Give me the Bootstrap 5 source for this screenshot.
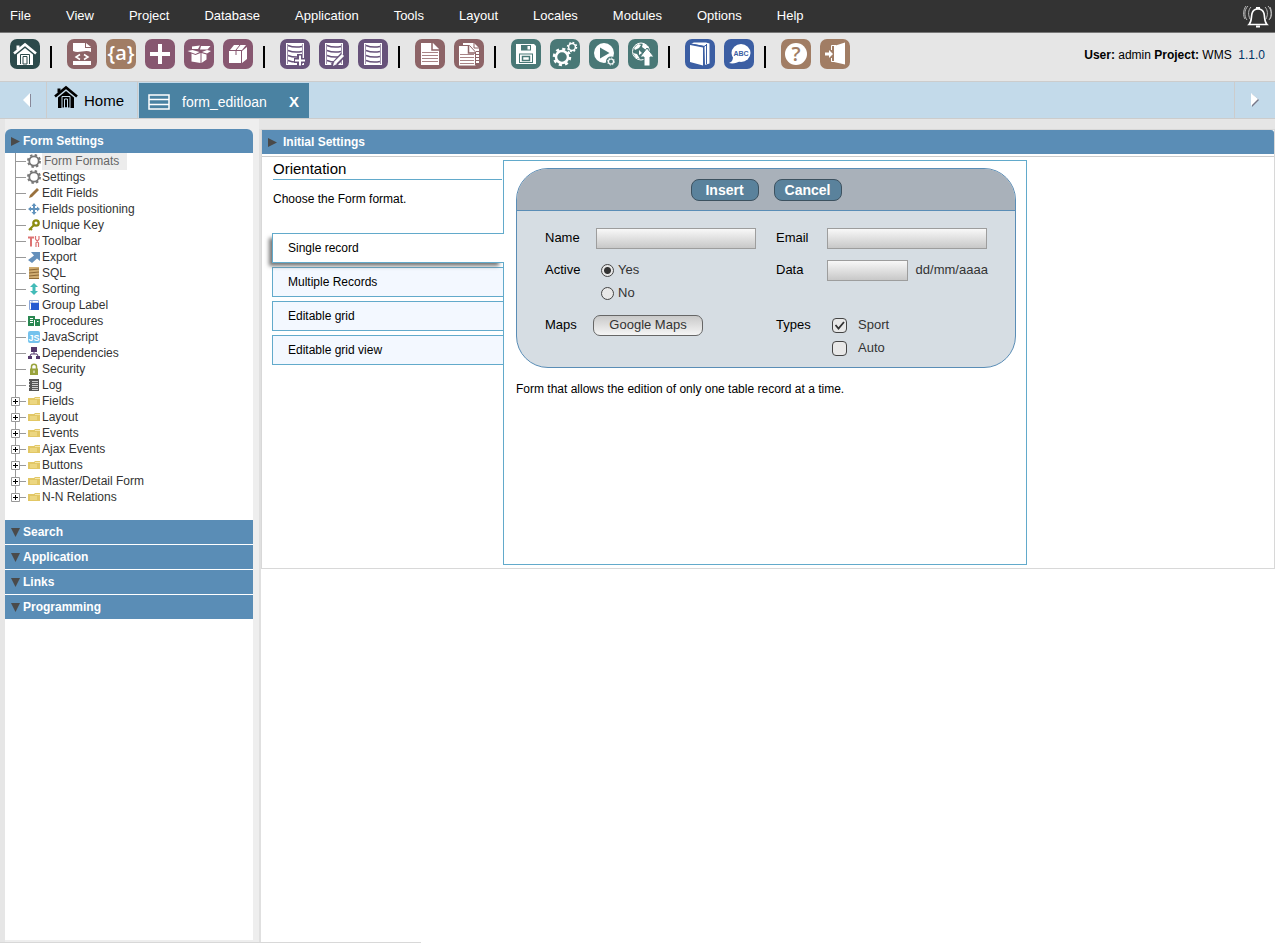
<!DOCTYPE html>
<html lang="en">
<head>
<meta charset="utf-8">
<meta name="viewport" content="width=device-width, initial-scale=1">
<title>form_editloan</title>
<link href="https://cdn.jsdelivr.net/npm/bootstrap@5.3.0/dist/css/bootstrap.min.css" rel="stylesheet">
<style>
:root{--bar:#5a8db6;--edge:#62aacb;--line:#ccc}
body{font-family:"Liberation Sans",Arial,sans-serif;font-size:12px;line-height:16px;color:#000;background:#e6e6e6}
a{color:inherit;text-decoration:none}
svg{display:block;flex:none}
.menu{background:#333;color:#fff;border-bottom:1px solid #777;height:33px;font-size:13px;padding:0 3px 0 10px}
.menu ul{gap:35px}
.tools{height:48px;padding:0 10px 4px}
.sets{gap:15px;padding-bottom:2px}
.grp{gap:9px;padding-right:10px}
.sep{width:2px;height:22px;background:#000;margin-top:5px}
.tool{width:30px;height:30px;border:0;border-radius:7px;padding:0;color:#fff}
.home{background:#2c4a4b}.rose{background:#8d6467}.tan{background:#a17d64}.plum{background:#875770}
.violet{background:#67527a}.green{background:#497876}.blue{background:#3b5ea3}
.version{color:#036}
.tabs{background:#c3daea;height:38px;border:solid var(--line);border-width:1px 0}
.tabs .arrow{width:46px;border:0;background:none;padding:0 0 0 5px}
.tabs .next{width:41px;border-left:1px solid var(--line);padding:0}
.tab-home{width:92px;font-size:15px;gap:6px;padding:2px 0 0 7px;border:solid var(--line);border-width:0 1px}
.tab-open{width:170px;margin:1px 0 0 1px;padding:2px 10px 0 9px;gap:12px;background:#4a82a2;color:#fff;font-size:14px}
.tab-open button{border:0;background:none;color:#fff;font-weight:700;font-size:15px;padding:0}
.side{width:259px;padding:10px 0 2px 5px;background:linear-gradient(90deg,#e6e6e6 5px,#eee 5px)}
.side-in{width:248px;background:#fff;border-radius:6px 6px 0 0}
.bar{height:24px;background:var(--bar);color:#fff;font-weight:700;font-size:12px;padding:0 6px;gap:3px;border:0;text-align:left}
.side .bar + .bar{margin-top:1px}
.tree{padding:0 0 15px 10px;margin:0}
.tree li{height:16px;position:relative;display:flex;align-items:center;gap:2px;padding-left:13px;color:#333}
.tree li::before{content:"";position:absolute;left:0;top:0;bottom:0;border-left:1px solid #999}
.tree li:last-child::before{bottom:8px}
.tree li::after{content:"";position:absolute;left:0;top:8px;width:11px;border-top:1px solid #999}
.tree .on a{background:#ececec;color:#666;padding:0 8px 1px 2px;height:17px}
.cog{width:14px;height:14px;margin:0 -1px}
.plus{position:absolute;z-index:1;left:-4px;top:4px;width:9px;height:9px}
.work{border-left:2px solid #e0e0e0;margin-top:10px;background:#fff}
.panel{border:1px solid #d8d8d8}
.panel .bar{padding-left:6px;gap:6px;border-top-right-radius:3px}
.panel-in{border-top:1px solid var(--line);margin-top:2px;padding:3px 10px}
.pick{width:231px}
.pick h1{font-size:15px;line-height:18px;margin:0 1px 11px;padding-bottom:1px;border-bottom:1px solid var(--edge);font-weight:400}
.pick p{margin:0 1px 26px}
.opt{display:flex;align-items:center;width:231px;height:30px;padding:0 15px;margin-bottom:4px;border:1px solid var(--edge);border-right:0;background:#f3f8ff;text-align:left}
.opt.on{width:232px;background:#fff;position:relative;box-shadow:-4px 4px 4px -1px #777;clip-path:inset(0 0 -8px -8px)}
.frame{width:524px;min-height:405px;border:1px solid var(--edge);padding:7px 12px 0}
.demo{width:500px;height:200px;border:1px solid var(--bar);border-radius:32px;background:#d6dde3;overflow:hidden;font-size:13px}
.demo-top{height:42px;background:#a9b1ba;border-bottom:1px solid var(--bar);gap:15px}
.demo-top button{width:68px;height:22px;padding:0;border:1px solid #3d5260;border-radius:8px;background:#5a829c;color:#fff;font-weight:700;font-size:14px;line-height:20px}
.demo-grid{display:grid;grid-template-columns:51px 180px 51px 1fr;grid-auto-rows:min-content;row-gap:9px;padding:15px 0 0 28px}
.line{display:flex;align-items:center;height:23px;padding-top:1px}
.field{width:160px;height:21px;border:1px solid #9d9d9d;border-radius:0;background:linear-gradient(#f8f8f8,#c8c8c8);padding:0 4px}
.field.short-date{width:81px}
.soft{color:#333}
.tick{appearance:none;width:13px;height:13px;margin:0;border:1px solid #444;background:#e8e8e8;flex:none}
.tick[type=radio]{border-radius:50%;margin:0 4px 0 5px}
.tick[type=radio]:checked{background:radial-gradient(#333 0 3px,#e8e8e8 4px)}
.tick[type=checkbox]{width:15px;height:15px;border-radius:4px;margin:0 11px 0 5px}
.tick[type=checkbox]:checked{background:#e8e8e8 url("data:image/svg+xml,%3Csvg xmlns='http://www.w3.org/2000/svg' viewBox='0 0 13 13'%3E%3Cpath d='M2.500 6l3 3.500L11 3' fill='none' stroke='%23333' stroke-width='1.800'/%3E%3C/svg%3E")}
.maps{width:110px;height:21px;margin-left:-3px;border:1px solid #666;border-radius:7px;background:linear-gradient(#c9c9c9,#f5f5f5);padding:0}
.note{margin:13px 0 0}
.foot-line{height:1px;background:linear-gradient(90deg,#d8d8d8 33%,#fff 33%)}
</style>
</head>
<body class="d-flex flex-column vh-100 overflow-hidden">

<!-- shared glyphs -->
<svg width="0" height="0" class="position-absolute">
<symbol id="hut" viewBox="0 0 24 24"><path d="M1 11.500 12 2.500l11 9" fill="none" stroke="currentColor" stroke-width="2.600"/><path d="M4 12.500 12 6l8 6.500V23H4z" fill="currentColor"/><path d="M3.500 3.500h3v4h-3z" fill="currentColor"/></symbol>
<symbol id="right" viewBox="0 0 9 9"><path d="M0 0 9 4.500 0 9z" fill="#4a4a4a"/></symbol>
<symbol id="down" viewBox="0 0 9 9"><path d="M0 0H9L4.500 9z" fill="#4a4a4a"/></symbol>
<symbol id="box-plus" viewBox="0 0 9 9"><path d="M.5.5h8v8h-8z" fill="#fff" stroke="#999"/><path d="M2 4.500h5M4.500 2v5" stroke="#000"/></symbol>
<symbol id="folder" viewBox="0 0 12 12"><path d="M0 3h6l1-1h5v8H0z" fill="#e2c765"/><path d="M0 4h7v-1h5v1H0z" fill="#f6e7ab"/><path d="M2 5h7v4H2z" fill="#ecd680"/></symbol>
<symbol id="gear" viewBox="0 0 14 14"><circle cx="7" cy="7" r="4.700" fill="none" stroke="#777" stroke-width="1.800"/><circle cx="7" cy="7" r="6" fill="none" stroke="#777" stroke-width="2" stroke-dasharray="2.400 2.310"/></symbol>
<symbol id="sheet" viewBox="0 0 30 30"><path d="M6 4h12l6 6v16H6z" fill="#fff"/><path d="M17 4v7h7" fill="none" stroke="#8d6467" stroke-width="1.500"/><path d="M7 13.500h16M7 16.500h16M7 19.500h16M7 22.500h16" stroke="#a98486"/></symbol>
<symbol id="db" viewBox="0 0 30 30"><path d="M6 4h18v22H6z" fill="#fff"/><path d="M8 6.500c5 2 9 2 14 1M8 11.500c5 2 9 2 14 1M8 16.500c5 2 9 2 14 1M8 21.500c5 2 9 2 14 1" fill="none" stroke="#67527a" stroke-width="1.500"/><path d="M7.500 5v20M22.500 5v20" stroke="#a497b1"/></symbol>
</svg>

<nav class="menu d-flex align-items-center justify-content-between flex-shrink-0">
<ul class="list-unstyled d-flex m-0">
<li><a href="#">File</a></li><li><a href="#">View</a></li><li><a href="#">Project</a></li><li><a href="#">Database</a></li><li><a href="#">Application</a></li><li><a href="#">Tools</a></li><li><a href="#">Layout</a></li><li><a href="#">Locales</a></li><li><a href="#">Modules</a></li><li><a href="#">Options</a></li><li><a href="#">Help</a></li>
</ul>
<a href="#" aria-label="Notifications"><svg width="30" height="26" viewBox="0 0 30 26" fill="none" stroke="#fff"><path stroke-width="1.600" d="M7 21.500c3-3 2-7 3-11 .8-3 3-4.500 6-4.500s5.200 1.500 6 4.500c1 4 0 8 3 11z"/><path stroke-width="2" d="M14 5h4M14 23.500h4"/><path stroke="#bbb" d="M9 4c-3 3-3 8-1 12M6 3C2 7 2 13 5 17M4 3C1 7 1 13 3 16M23 4c3 3 3 8 1 12M26 3c4 4 4 10 1 14M28 4c2 4 2 9 0 12"/></svg></a>
</nav>

<header class="tools d-flex flex-shrink-0 align-items-center">
<div class="sets d-flex flex-grow-1 align-items-center">
<div class="d-flex align-items-center"><div class="grp d-flex">
<button class="tool home" aria-label="Home"><svg width="30" height="30" viewBox="0 0 30 30"><use href="#hut" x="3" y="3" width="24" height="24"/><path d="M10.500 15.500h9V25M10.500 15.500V25M13 17.500h4V25h-4z" fill="none" stroke="#2c4a4b"/></svg></button></div><span class="sep"></span></div>
<div class="d-flex align-items-center"><div class="grp d-flex">
<button class="tool rose" aria-label="Source"><svg width="30" height="30" viewBox="0 0 30 30"><path d="M6 4h12v5h6v4c-6-3-12 2-18-1zM19 4l5 4h-5zM6 22h18v4H6z" fill="#fff"/><path d="m13 15.500-4 2.500 4 2.500M17 15.500l4 2.500-4 2.500" fill="none" stroke="#fff" stroke-width="1.500"/></svg></button>
<button class="tool tan" aria-label="Variables"><svg width="30" height="30" viewBox="0 0 30 30"><text x="15" y="21" text-anchor="middle" font-family="Open Sans" font-size="20" font-weight="600" fill="#fff">{a}</text></svg></button>
<button class="tool plum" aria-label="New"><svg width="30" height="30" viewBox="0 0 30 30"><path d="M15 5v20M5 15h20" stroke="#fff" stroke-width="4"/></svg></button>
<button class="tool plum" aria-label="Open project"><svg width="30" height="30" viewBox="0 0 30 30"><path d="m8 7.500 8-1-2 3.500H8zM17 7h9.500l-3 3.500H16zM3.500 12l5-1 7 2-4 2zM18 13l5-2 4 1-4 2.500zM7.500 14.500l4 1.500 5-2v10l-9-1.500zM17.500 14l5 1.500v5l-5 3.500z" fill="#fff"/></svg></button>
<button class="tool plum" aria-label="Package"><svg width="30" height="30" viewBox="0 0 30 30"><path d="M6 12h12v12H6zM19 12l5-4v12l-5 4zM7 11l4-5h12l-4 5z" fill="#fff"/><path d="m13 11 4-5M13 12v4" stroke="#875770"/></svg></button></div><span class="sep"></span></div>
<div class="d-flex align-items-center"><div class="grp d-flex">
<button class="tool violet" aria-label="New table"><svg width="30" height="30" viewBox="0 0 30 30"><use href="#db"/><path d="M14 21.500h11M19.500 15v11" stroke="#67527a" stroke-width="5"/><path d="M15 21.500h10M20 16.500v10" stroke="#fff" stroke-width="2"/></svg></button>
<button class="tool violet" aria-label="Edit table"><svg width="30" height="30" viewBox="0 0 30 30"><use href="#db"/><path d="m14 27 10-11" stroke="#67527a" stroke-width="6"/><path d="m16 24 8-8" stroke="#fff" stroke-width="3"/><path d="m14 27 1-4 3 2z" fill="#fff"/></svg></button>
<button class="tool violet" aria-label="Table"><svg width="30" height="30"><use href="#db"/></svg></button></div><span class="sep"></span></div>
<div class="d-flex align-items-center"><div class="grp d-flex">
<button class="tool rose" aria-label="New application"><svg width="30" height="30"><use href="#sheet"/></svg></button>
<button class="tool rose" aria-label="Copy application"><svg width="30" height="30" viewBox="0 0 30 30"><path d="M9 4h11l5 5v15H9z" fill="#fff"/><path d="M20 4v5h5M22 12.500h3M22 15.500h3M22 18.500h3M22 21.500h3" fill="none" stroke="#8d6467"/><path d="M5 7h10l6.500 6v13.500H5z" fill="#fff"/><path d="M9 6.500h6.500l6 6.500v13" fill="none" stroke="#8d6467"/><path d="M14.500 7v7H21" fill="none" stroke="#8d6467" stroke-width="1.500"/><path d="M6 15.500h14M6 18.500h14M6 21.500h14M6 24.500h14" stroke="#a98486"/></svg></button></div><span class="sep"></span></div>
<div class="d-flex align-items-center"><div class="grp d-flex">
<button class="tool green" aria-label="Save"><svg width="30" height="30" viewBox="0 0 30 30"><path d="M5 5h18l2 2v18H5z" fill="#fff"/><path d="M10 6h10v5.500H10zM8 14.500h14V24H8z" fill="#497876"/><path d="M16.500 7h2.500v3.500h-2.500zM9 15.500h12V23H9z" fill="#fff"/><path d="M11.500 17.500h7v4h-7z" fill="none" stroke="#497876" stroke-width="1.500"/></svg></button>
<button class="tool green" aria-label="Generate"><svg width="30" height="30" viewBox="0 0 30 30" fill="none" stroke="#fff"><circle cx="12" cy="18" r="6" stroke-width="2.500"/><circle cx="12" cy="18" r="8" stroke-width="2.500" stroke-dasharray="3.100 3.180"/><circle cx="22" cy="8" r="3.400" stroke-width="1.500"/><circle cx="22" cy="8" r="4.500" stroke-width="1.500" stroke-dasharray="1.760 1.770"/></svg></button>
<button class="tool green" aria-label="Run"><svg width="30" height="30" viewBox="0 0 30 30"><circle cx="15" cy="14" r="10" fill="#fff"/><path d="m11 8.500 9.500 5.500-9.500 5.500z" fill="#497876"/><circle cx="22" cy="22.500" r="5" fill="#497876"/><circle cx="22" cy="22.500" r="2.500" fill="none" stroke="#fff" stroke-width="1.200"/><circle cx="22" cy="22.500" r="3.500" fill="none" stroke="#fff" stroke-dasharray="1.300 1.400"/></svg></button>
<button class="tool green" aria-label="Deploy"><svg width="30" height="30" viewBox="0 0 30 30"><circle cx="13" cy="12.500" r="8.500" fill="none" stroke="#fff"/><path d="m6 9 4-4 3 1-2 3-4 2zM15 4l6 4-3 3-4-3zM5 14l4 1 3 5-4-1zM11 11l3 3-3 2z" fill="#fff"/><path d="m19 9 7 9h-4v9h-6v-9h-4z" fill="#fff" stroke="#497876"/></svg></button></div><span class="sep"></span></div>
<div class="d-flex align-items-center"><div class="grp d-flex">
<button class="tool blue" aria-label="Manual"><svg width="30" height="30" viewBox="0 0 30 30"><path d="m5 6 13 2.500v18L5 23zM6 4.500 9 3.500h12l3.500 1v20l-5 1.500V7z" fill="#fff"/><path d="M21.500 5v20M18.500 8l1 18M6 5l13 2.500 3-2" fill="none" stroke="#3b5ea3"/></svg></button>
<button class="tool blue" aria-label="Dictionary"><svg width="30" height="30" viewBox="0 0 30 30"><ellipse cx="17" cy="14" rx="9.500" ry="9" fill="#fff"/><path d="M9 17c0 4-1 6-4 7 4 1 8 0 11-2z" fill="#fff"/><text x="17" y="17" text-anchor="middle" font-size="7" font-weight="700" font-family="Liberation Sans" fill="#3b5ea3">ABC</text></svg></button></div><span class="sep"></span></div>
<div class="d-flex align-items-center"><div class="grp d-flex">
<button class="tool tan" aria-label="Help"><svg width="30" height="30" viewBox="0 0 30 30"><circle cx="15" cy="15" r="11" fill="#fff"/><text x="15" y="22" text-anchor="middle" font-size="20" font-family="Open Sans" font-weight="600" fill="#a17d64">?</text></svg></button>
<button class="tool tan" aria-label="Exit"><svg width="30" height="30" viewBox="0 0 30 30"><path d="m14 7 11-3.500v22L14 23z" fill="#fff"/><path d="M5 13.500h4V11l4 4-4 4v-2.500H5z" fill="#fff"/><path d="M11.500 11V6.500H16M11.500 19v3.500h3" fill="none" stroke="#fff"/></svg></button></div></div>
</div>
<div class="text-nowrap"><b>User:</b> admin <b>Project:</b> WMS &nbsp;<span class="version">1.1.0</span></div>
</header>

<div class="tabs d-flex flex-shrink-0">
<button class="arrow d-flex align-items-center justify-content-center" aria-label="Previous tab"><svg width="10" height="16" viewBox="0 0 10 16"><path d="M9 1v14l-7-7z" fill="#fff"/><path d="M9.500 2v13" stroke="#889"/></svg></button>
<a href="#" class="tab-home d-flex align-items-center"><svg width="24" height="24" viewBox="0 0 24 24" class="mb-2"><use href="#hut"/><path d="M8 11.500h8V23H8zM10.500 14h3v9h-3z" fill="none" stroke="#c3daea"/></svg>Home</a>
<div class="tab-open d-flex align-items-center"><svg width="22" height="16" viewBox="0 0 22 16" fill="none" stroke="#fff" stroke-width="1.500"><path d="M1 1h20v14H1zM1 5.500h20M1 10.500h20"/></svg><a href="#">form_editloan</a><button class="ms-auto" aria-label="Close tab">X</button></div>
<div class="flex-grow-1"></div>
<button class="arrow next d-flex align-items-center justify-content-center" aria-label="Next tab"><svg width="10" height="16" viewBox="0 0 10 16"><path d="M2 2v13l7-7z" fill="#778"/><path d="M1 1v13l7-7z" fill="#fff"/></svg></button>
</div>

<div class="d-flex flex-grow-1 overflow-hidden">
<aside class="side flex-shrink-0">
<div class="side-in h-100 d-flex flex-column">
<button class="bar d-flex align-items-center flex-shrink-0 rounded-top"><svg width="9" height="9"><use href="#right"/></svg>Form Settings</button>
<ul class="tree list-unstyled">
<li class="on"><svg class="cog"><use href="#gear"/></svg><a href="#">Form Formats</a></li>
<li><svg class="cog"><use href="#gear"/></svg><a href="#">Settings</a></li>
<li><svg width="12" height="12" viewBox="0 0 12 12"><path d="m1 11 1-3 7-7 2 2-7 7z" fill="#99713d"/></svg><a href="#">Edit Fields</a></li>
<li><svg width="12" height="12" viewBox="0 0 12 12"><path d="M6 1v10M1 6h10" stroke="#6193bd" stroke-width="2"/><path d="m6 0 2.500 3h-5zM6 12 3.500 9h5zM0 6l3-2.500v5zM12 6 9 3.500v5z" fill="#6193bd"/></svg><a href="#">Fields positioning</a></li>
<li><svg width="12" height="12" viewBox="0 0 12 12"><path d="m1 11 6-6M2 9l2 2" stroke="#8c8c10" stroke-width="2"/><circle cx="8" cy="4" r="2.700" fill="none" stroke="#8c8c10" stroke-width="2.300"/></svg><a href="#">Unique Key</a></li>
<li><svg width="12" height="12" viewBox="0 0 12 12" fill="none" stroke="#dd7272"><path d="M0 2.500h6" stroke-width="2"/><path d="M3 3v8.500" stroke-width="2"/><path d="M7.500 1v3l3 4v4M11 1v3L8 8v4" stroke-width="1.200"/></svg><a href="#">Toolbar</a></li>
<li><svg width="12" height="12" viewBox="0 0 12 12"><path d="M3 1h9v9L9 7.500 4 12l-4-3 6-4.500z" fill="#6590bb"/></svg><a href="#">Export</a></li>
<li><svg width="12" height="12" viewBox="0 0 12 12"><path d="M1 0h10v12H1z" fill="#d0ad72"/><path d="m1 3 10-1M1 6l10-1M1 9l10-1M1 11.500h10" stroke="#8d6937" stroke-width="1.200"/></svg><a href="#">SQL</a></li>
<li><svg width="12" height="12" viewBox="0 0 12 12"><path d="m6 0 4 4H7.500v4H10l-4 4-4-4h2.500V4H2z" fill="#42bbb8"/></svg><a href="#">Sorting</a></li>
<li><svg width="12" height="12" viewBox="0 0 12 12"><path d="M1.500 1.500h9v9h-9zM4 1v10M1 4h10" fill="none" stroke="#8ba6d8"/><path d="M3 4h8v7H3z" fill="#245bd1"/></svg><a href="#">Group Label</a></li>
<li><svg width="12" height="12" viewBox="0 0 12 12"><path d="M0 1h7v3h5v7H0z" fill="#2a8751"/><path d="M2 3.500h3M2 5.500h3M2 7.500h3M6.500 5v7M9 6.500h1.500" stroke="#fff"/></svg><a href="#">Procedures</a></li>
<li><svg width="12" height="12" viewBox="0 0 12 12"><rect width="12" height="12" rx="2" fill="#75c2ed"/><text x="6" y="10" text-anchor="middle" font-size="9" font-weight="700" font-family="Liberation Sans" fill="#fff">JS</text></svg><a href="#">JavaScript</a></li>
<li><svg width="12" height="12" viewBox="0 0 12 12"><path d="M3 0h6v5H3zM0 9h4v3H0zM8 9h4v3H8z" fill="#55396d"/><path d="M6 5v2M2 9l1-2h6l1 2" fill="none" stroke="#55396d"/></svg><a href="#">Dependencies</a></li>
<li><svg width="12" height="12" viewBox="0 0 12 12"><path d="M3.500 6V3.500C3.500.5 8.500.5 8.500 3.500V6" fill="none" stroke="#99a33c" stroke-width="1.500"/><path d="M2 5.500h8V12H2z" fill="#99a33c"/><path d="M6 7.500v2.500" stroke="#fff"/></svg><a href="#">Security</a></li>
<li><svg width="12" height="12" viewBox="0 0 12 12"><path d="M1 0h10v12H1z" fill="#555"/><path d="M4 2.500h6M4 4.500h6M4 6.500h6M4 8.500h6M4 10.500h6M1 2.500h1M1 5.500h1M1 8.500h1" stroke="#ccc"/></svg><a href="#">Log</a></li>
<li><svg class="plus"><use href="#box-plus"/></svg><svg width="12" height="12"><use href="#folder"/></svg><a href="#">Fields</a></li>
<li><svg class="plus"><use href="#box-plus"/></svg><svg width="12" height="12"><use href="#folder"/></svg><a href="#">Layout</a></li>
<li><svg class="plus"><use href="#box-plus"/></svg><svg width="12" height="12"><use href="#folder"/></svg><a href="#">Events</a></li>
<li><svg class="plus"><use href="#box-plus"/></svg><svg width="12" height="12"><use href="#folder"/></svg><a href="#">Ajax Events</a></li>
<li><svg class="plus"><use href="#box-plus"/></svg><svg width="12" height="12"><use href="#folder"/></svg><a href="#">Buttons</a></li>
<li><svg class="plus"><use href="#box-plus"/></svg><svg width="12" height="12"><use href="#folder"/></svg><a href="#">Master/Detail Form</a></li>
<li><svg class="plus"><use href="#box-plus"/></svg><svg width="12" height="12"><use href="#folder"/></svg><a href="#">N-N Relations</a></li>
</ul>
<button class="bar d-flex align-items-center flex-shrink-0"><svg width="9" height="9"><use href="#down"/></svg>Search</button>
<button class="bar d-flex align-items-center flex-shrink-0"><svg width="9" height="9"><use href="#down"/></svg>Application</button>
<button class="bar d-flex align-items-center flex-shrink-0"><svg width="9" height="9"><use href="#down"/></svg>Links</button>
<button class="bar d-flex align-items-center flex-shrink-0"><svg width="9" height="9"><use href="#down"/></svg>Programming</button>
</div>
</aside>

<main class="work flex-grow-1">
<section class="panel">
<button class="bar d-flex align-items-center w-100"><svg width="9" height="9"><use href="#right"/></svg>Initial Settings</button>
<div class="panel-in d-flex">
<div class="pick flex-shrink-0">
<h1>Orientation</h1>
<p>Choose the Form format.</p>
<button class="opt on">Single record</button>
<button class="opt">Multiple Records</button>
<button class="opt">Editable grid</button>
<button class="opt">Editable grid view</button>
</div>
<div class="frame flex-shrink-0">
<form class="demo">
<div class="demo-top d-flex align-items-center justify-content-center"><button type="button">Insert</button><button type="button">Cancel</button></div>
<div class="demo-grid">
<label class="line" for="f-name">Name</label><div class="line"><input class="field" id="f-name" type="text"></div>
<label class="line" for="f-email">Email</label><div class="line"><input class="field" id="f-email" type="text"></div>
<div class="line">Active</div>
<div class="soft"><label class="line"><input class="tick" type="radio" name="active" checked>Yes</label><label class="line"><input class="tick" type="radio" name="active">No</label></div>
<label class="line" for="f-date">Data</label><div class="line soft"><input class="field short-date me-1" id="f-date" type="text">&nbsp;dd/mm/aaaa</div>
<div class="line">Maps</div><div class="line"><button type="button" class="maps soft">Google Maps</button></div>
<div class="line">Types</div>
<div class="soft"><label class="line"><input class="tick" type="checkbox" checked>Sport</label><label class="line"><input class="tick" type="checkbox">Auto</label></div>
</div>
</form>
<p class="note">Form that allows the edition of only one table record at a time.</p>
</div>
</div>
</section>
</main>
</div>
<div class="foot-line flex-shrink-0"></div>
<script src="https://cdn.jsdelivr.net/npm/bootstrap@5.3.0/dist/js/bootstrap.bundle.min.js"></script>
</body>
</html>
